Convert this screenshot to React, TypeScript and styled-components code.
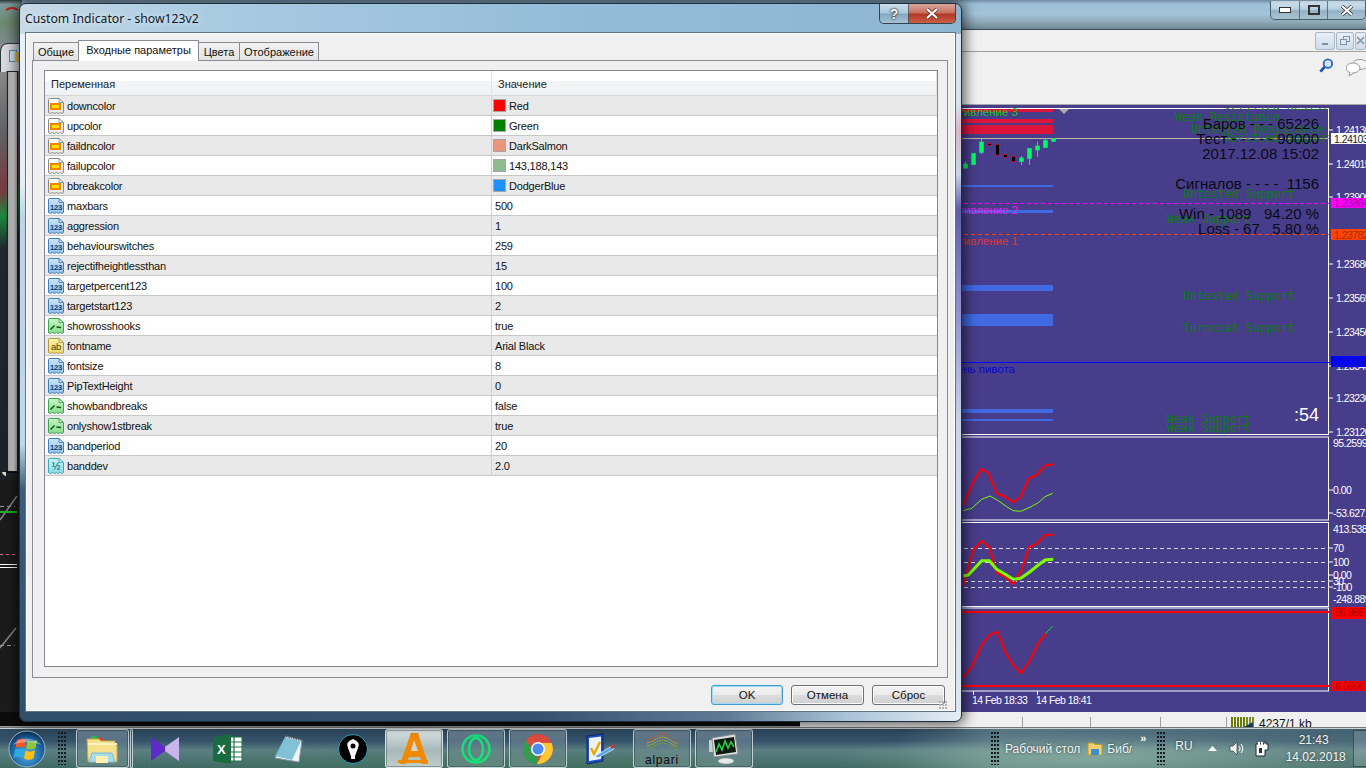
import React from "react";
import styled, { createGlobalStyle } from "styled-components";

const Global = createGlobalStyle`
  html, body { margin: 0; padding: 0; background: #000; overflow: hidden; }
  * { box-sizing: border-box; }
`;

const UI = `"Liberation Sans", Arial, sans-serif`;

const Desktop = styled.div`
  position: relative; width: 1366px; height: 768px; overflow: hidden;
  display: flex; flex-direction: column; font-family: ${UI}; font-size: 11px; color: #111;
`;
const MainTitle = styled.div`
  height: 30px; flex: none; display: flex; justify-content: flex-end; align-items: flex-start;
  border-bottom: 1px solid #3d4a55;
  background: linear-gradient(180deg, #6f8aa0 0, #9cc0d8 4px, #a3c4da 14px, #8fa8b8 22px, #6f8793 29px);
  padding-top: 1px;
`;
const CaptionGroup = styled.div`
  display: flex; height: 19px; border: 1px solid #4a5c6a; border-top: 0; border-radius: 0 0 5px 5px; overflow: hidden;
`;
const CaptionBtn = styled.div<{ $w: number; $red?: boolean }>`
  width: ${p => p.$w}px; display: flex; align-items: center; justify-content: center;
  border-left: 1px solid rgba(60,80,95,.7);
  background: ${p => p.$red
    ? "linear-gradient(180deg,#dba79e 0,#c9705f 45%,#b03a26 55%,#c9604a 100%)"
    : "linear-gradient(180deg,rgba(255,255,255,.55) 0,rgba(255,255,255,.25) 45%,rgba(120,140,150,.35) 55%,rgba(190,210,220,.45) 100%)"};
  &:first-child { border-left: 0; }
`;
const MdiBar = styled.div`
  height: 22px; flex: none; background: #f0f0f0; border-bottom: 1px solid #a0a0a0;
  display: flex; justify-content: flex-end; align-items: center; padding-right: 0;
  gap: 1px;
`;
const MdiBtn = styled.div<{ $w: number }>`
  width: ${p => p.$w}px; height: 18px; border: 1px solid #a9b8c6; border-radius: 2px;
  background: linear-gradient(180deg,#e9eff6,#cfdcea); display: flex; align-items: center; justify-content: center;
  color: #6b8299;
`;
const Toolbar = styled.div`
  height: 53px; flex: none; background: #f0f0f0; border-bottom: 1px solid #a8a8a8;
  display: flex; justify-content: flex-end; align-items: flex-start; padding: 3px 0 0 0; gap: 12px;
`;
const Workspace = styled.svg`
  display: block; flex: none; width: 1366px; height: 607px; background: #483d8b;
`;
const StatusBar = styled.div`
  height: 16px; flex: none; background: #f0f0f0; display: flex; overflow: hidden;
  padding-left: 1022px; border-bottom: 1px solid #777;
`;
const StatusCell = styled.div<{ $w: number }>`
  width: ${p => p.$w}px; height: 11px; margin-top: 5px; border-left: 1px solid #a0a0a0; display: flex; gap: 4px; padding-left: 4px;
  font-size: 12px; line-height: 14px; white-space: nowrap; align-items: flex-start; color: #111;
`;
const BlackStrip = styled.div`
  position: absolute; left: 0; top: 712px; width: 800px; height: 15px; background: #0c0c0c;
  border-bottom: 1px solid #9a9a9a;
`;
const LeftStrip = styled.svg`
  position: absolute; left: 0; top: 0; width: 22px; height: 480px;
`;
const Taskbar = styled.div`
  height: 40px; flex: none; display: flex; align-items: stretch; position: relative; color: #f4f4f4;
  border-top: 1px solid #c8d2d6;
  background:
    radial-gradient(ellipse 260px 26px at 1090px 30px, rgba(150,190,170,.55), transparent),
    radial-gradient(ellipse 300px 20px at 480px 36px, rgba(70,120,95,.6), transparent),
    linear-gradient(90deg, rgba(0,0,0,0) 0, rgba(0,0,0,0) 900px, rgba(140,170,170,.45) 1000px, rgba(120,150,150,.3) 100%),
    linear-gradient(180deg, #2e4a60 0, #34526a 30%, #5b7f82 55%, #3f6a62 100%);
`;
const Orb = styled.div`
  width: 58px; flex: none; display: flex; align-items: center; justify-content: center; padding-right: 4px;
`;
const Grip = styled.div<{ $ml?: number }>`
  width: 8px; margin: 3px 0 3px ${p => p.$ml ?? 0}px; flex: none;
  background-image: radial-gradient(circle at 1px 1px, #161d22 1px, transparent 1.2px);
  background-size: 3px 4px;
`;
const TaskSlot = styled.div<{ $w: number; $ml?: number; $boxed?: boolean; $bright?: boolean }>`
  width: ${p => p.$w}px; margin-left: ${p => p.$ml ?? 0}px; flex: none; display: flex; flex-direction: column;
  align-items: center; justify-content: center; border-radius: 3px;
  ${p => p.$boxed ? `border: 1px solid rgba(225,235,240,.75);
    box-shadow: inset 0 0 0 1px rgba(20,40,50,.35);
    background: ${p.$bright
      ? "linear-gradient(180deg,rgba(240,245,245,.92),rgba(180,195,195,.85) 55%,rgba(205,215,215,.9))"
      : "linear-gradient(180deg,rgba(200,215,220,.38),rgba(130,150,160,.3) 50%,rgba(140,165,165,.42))"};` : ""}
`;
const AlpariLabel = styled.div`
  font-size: 12px; line-height: 12px; color: #0d0d0d; letter-spacing: .8px; margin-top: 0;
`;
const TrayText = styled.div<{ $ml: number; $w?: number; $dy?: number }>`
  margin-left: ${p => p.$ml}px; margin-top: ${p => p.$dy ?? 0}px; ${p => p.$w ? `width:${p.$w}px;overflow:hidden;` : ""} flex: none; font-size: 12px;
  white-space: nowrap; align-self: center; color: #eef2f2; text-shadow: 0 0 3px rgba(0,0,0,.6);
`;
const Chevron = styled.div`
  margin-left: 8px; align-self: flex-start; font-size: 11px; font-weight: bold; line-height: 18px; flex: none; width: 9px; color: #fff;
`;
const TrayIcon = styled.div<{ $ml: number }>`
  margin-left: ${p => p.$ml}px; flex: none; align-self: center; display: flex;
`;
const Clock = styled.div`
  margin-left: 17px; width: 56px; flex: none; text-align: center; font-size: 12px; line-height: 17px; align-self: center; color: #f4f6f6;
  text-shadow: 0 0 3px rgba(0,0,0,.5);
`;
const ShowDesktop = styled.div`
  margin-left: 11px; flex: none; width: 14px; margin-top: 1px; margin-bottom: 1px;
  border: 1px solid rgba(40,55,60,.7); background: rgba(220,235,235,.18);
`;

/* dialog */
const Dialog = styled.div`
  position: absolute; left: 19px; top: 3px; width: 943px; height: 719px; display: flex; flex-direction: column;
  border-radius: 7px; padding: 0 5px 9px 5px; border: 1px solid #1f2d3a;
  box-shadow: 0 0 13px 3px rgba(0,0,0,.62);
  background:
    linear-gradient(90deg, #c6d9e6 0, #a9cbe2 20%, #93bbd7 60%, #8eb6d2 100%) top / 100% 30px no-repeat,
    linear-gradient(90deg, #2f4e6a 0, #34526e 55%, #5d7b95 75%, #aac3d8 88%, #e4edf4 100%) bottom / 100% 10px no-repeat,
    linear-gradient(180deg, #e9f2fb 0, #e4eff9 180px, #bcd5ec 212px, #bed8f0 440px, #3b5c7c 485px, #2f4e6a 100%) left top / 6px 100% no-repeat,
    linear-gradient(180deg, #dce9f4 0, #d6e4f0 100px, #d8b6c8 125px, #c8d6ea 170px, #5e5ea8 205px, #8e8ed0 300px, #c8d4ea 420px, #dbe7f0 100%) right top / 6px 100% no-repeat,
    #c8d8e6;
`;
const DialogTitle = styled.div`
  height: 28px; flex: none; display: flex; justify-content: space-between; align-items: flex-start; font: 12.2px "Noto Sans", sans-serif; color: #10181f;
`;
const DialogCaption = styled.div`
  padding: 6px 0 0 0; text-shadow: 0 0 6px rgba(255,255,255,.9);
`;
const DialogButtons = styled(CaptionGroup)`
  margin-right: 0; height: 20px; border-color: #33434f;
`;
const Client = styled.div`
  flex: 1; display: flex; flex-direction: column; background: #f0f0f0; border: 1px solid #5f7385; padding: 7px 7px 0 6px; min-height: 0;
  box-shadow: inset 0 0 0 1px rgba(255,255,255,.85);
`;
const TabBar = styled.div`
  display: flex; height: 20px; flex: none; padding-left: 2px; align-items: flex-end; position: relative; z-index: 1;
`;
const Tab = styled.div<{ $w: number; $active?: boolean }>`
  width: ${p => p.$w}px; flex: none; text-align: center; white-space: nowrap;
  border: 1px solid #898c95; border-bottom: 0;
  ${p => p.$active ? `height: 21px; margin-bottom: -1px; background: #fff; line-height: 19px; position: relative; z-index: 2; margin-left:-1px;`
    : `height: 18px; background: linear-gradient(180deg,#f2f2f2,#e3e3e3); line-height: 18px; margin-left:-1px;`}
`;
const Pane = styled.div`
  height: 618px; flex: none; border: 1px solid #898c95; background: #f0f0f0; padding: 9px 9px 10px 11px; display: flex;
`;
const List = styled.div`
  flex: 1; border: 1px solid #828790; background: #fff; display: flex; flex-direction: column;
`;
const HeaderRow = styled.div`
  height: 25px; flex: none; display: grid; grid-template-columns: 447px 1fr; border-bottom: 1px solid #d5d5d5;
  background: linear-gradient(180deg,#fff 0,#fff 40%,#f3f4f6 42%,#f1f2f4 100%);
`;
const HeaderCell = styled.div`
  padding: 0 0 0 6px; line-height: 26px; border-right: 1px solid #e3e4e6; color: #222;
`;
const Row = styled.div<{ $alt: boolean }>`
  height: 20px; flex: none; display: grid; grid-template-columns: 447px 1fr; border-bottom: 1px solid #c8c8c8;
  letter-spacing: -.2px;
  background: ${p => p.$alt ? "#e9e9e9" : "#fff"};
`;
const NameCell = styled.div`
  display: flex; align-items: center; padding-left: 3px; gap: 3px; border-right: 1px solid #d0d0d0; height: 19px; color: #111;
`;
const ValueCell = styled.div`
  display: flex; align-items: center; padding-left: 3px; gap: 3px; height: 19px; color: #111;
`;
const Swatch = styled.span<{ $c: string }>`
  width: 13px; height: 13px; flex: none; background: ${p => p.$c}; border: 1px solid #a5a5a5; margin-left: -2px;
`;
const Footer = styled.div`
  flex: 1; display: flex; justify-content: flex-end; gap: 8px; padding: 7px 3px 0 0; position: relative;
`;
const Btn = styled.div<{ $def?: boolean }>`
  width: ${p => p.$def ? 72 : 73}px; height: 20px; text-align: center; line-height: 18px; font-size: 11.5px; border-radius: 3px;
  border: 1px solid ${p => p.$def ? "#3c9fd0" : "#707070"};
  box-shadow: inset 0 0 0 1px ${p => p.$def ? "#9edcf5" : "#fbfbfb"};
  background: linear-gradient(180deg,#f3f3f3 0,#ebebeb 48%,#ddd 50%,#cfcfcf 100%);
`;
const SizeGrip = styled.div`
  position: absolute; right: 0; bottom: 1px; width: 9px; height: 9px;
  background-image: radial-gradient(circle at 1px 1px, #b5b5b5 1px, transparent 1.1px);
  background-size: 3px 3px;
`;

type Kind = "color" | "int" | "bool" | "str" | "dbl";
const palette: Record<Kind, { a: string; b: string; line: string }> = {
  color: { a: "#fff", b: "#e6e6e6", line: "#8a8a8a" },
  int: { a: "#cfe4f8", b: "#8fc0ea", line: "#3f7fb8" },
  bool: { a: "#c8f3c4", b: "#86dc8c", line: "#3aa552" },
  str: { a: "#fbf1b0", b: "#ecd670", line: "#b09a3c" },
  dbl: { a: "#c8f2f4", b: "#86dce4", line: "#3eaab8" },
};
const ParamIcon = ({ kind }: { kind: Kind }) => {
  const p = palette[kind];
  const id = `g-${kind}`;
  return (
    <svg width="16" height="16" viewBox="0 0 16 16" style={{ flex: "none" }}>
      <defs>
        <linearGradient id={id} x1="0" y1="0" x2="0" y2="1">
          <stop offset="0" stopColor={p.a} /><stop offset="1" stopColor={p.b} />
        </linearGradient>
      </defs>
      <path d="M.5 1.5 Q.5.5 1.5.5 H11 L15.5 4.5 V14.5 l-1.5 1 -1.5-1 -2 1 -2-1 -2 1 -2-1 -2 1 -2-1Z" fill={`url(#${id})`} stroke={p.line} strokeWidth="1" />
      <path d="M11 .5V4.5H15.5" fill="none" stroke={p.line} strokeWidth=".8" />
      {kind === "color" && <>
        <rect x="2" y="5" width="11" height="7" fill="#f08400" />
        <rect x="4" y="7" width="7" height="3" fill="#ffdd00" />
      </>}
      {kind === "int" && <text x="8" y="12" textAnchor="middle" fontFamily={UI} fontSize="7.5" fontWeight="bold" fill="#0b3f73" letterSpacing="-.2">123</text>}
      {kind === "bool" && <path d="M2.5 11.5 L6.5 7.5 M8.5 9 L13 9.5" stroke="#0a5a1c" strokeWidth="1.5" fill="none" />}
      {kind === "str" && <text x="8" y="12" textAnchor="middle" fontFamily={UI} fontSize="9.5" fill="#4a3c00">ab</text>}
      {kind === "dbl" && <text x="8" y="12" textAnchor="middle" fontFamily={UI} fontSize="10" fill="#08525c">½</text>}
    </svg>
  );
};

const rows: { n: string; k: Kind; v: string; c?: string }[] = [
  { n: "downcolor", k: "color", v: "Red", c: "#ff0000" },
  { n: "upcolor", k: "color", v: "Green", c: "#008000" },
  { n: "faildncolor", k: "color", v: "DarkSalmon", c: "#e9967a" },
  { n: "failupcolor", k: "color", v: "143,188,143", c: "#8fbc8f" },
  { n: "bbreakcolor", k: "color", v: "DodgerBlue", c: "#1e90ff" },
  { n: "maxbars", k: "int", v: "500" },
  { n: "aggression", k: "int", v: "1" },
  { n: "behaviourswitches", k: "int", v: "259" },
  { n: "rejectifheightlessthan", k: "int", v: "15" },
  { n: "targetpercent123", k: "int", v: "100" },
  { n: "targetstart123", k: "int", v: "2" },
  { n: "showrosshooks", k: "bool", v: "true" },
  { n: "fontname", k: "str", v: "Arial Black" },
  { n: "fontsize", k: "int", v: "8" },
  { n: "PipTextHeight", k: "int", v: "0" },
  { n: "showbandbreaks", k: "bool", v: "false" },
  { n: "onlyshow1stbreak", k: "bool", v: "true" },
  { n: "bandperiod", k: "int", v: "20" },
  { n: "banddev", k: "dbl", v: "2.0" },
];

/* chart helpers: curve data given in 3x coordinates from origin (950,470) */
const pts = (a: number[][]) => a.map(([x, y]) => `${(950 + x / 3).toFixed(1)},${(470 + y / 3).toFixed(1)}`).join(" ");
const candles: [number, number, number, number, number, boolean][] = [
  [316, 492, 504, 484, 506, true], [340, 460, 494, 460, 494, true], [364, 426, 458, 416, 462, true],
  [388, 431, 436, 418, 438, false], [412, 433, 465, 425, 465, false], [436, 463, 472, 445, 480, false],
  [460, 469, 485, 469, 495, false], [484, 474, 485, 468, 495, true], [508, 445, 476, 445, 495, true],
  [532, 438, 450, 425, 470, true], [556, 421, 443, 416, 443, true], [580, 416, 424, 416, 426, true],
];
const AxisText = ({ x, y, t, c = "#fff" }: { x: number; y: number; t: string; c?: string }) => (
  <text x={x} y={y} fill={c} fontSize="10.5" letterSpacing="-.55" fontFamily={UI}>{t}</text>
);
const ax = (y: number, t: string, x = 1336) => (
  <g key={t + y}>
    <line x1="1329" x2="1333" y1={y} y2={y} stroke="#fff" />
    <AxisText x={x} y={y + 4} t={t} />
  </g>
);
const Zone = ({ y, h, c }: { y: number; h: number; c: string }) => <rect x="19" y={y} width="1034" height={h} fill={c} />;
const Lbl = ({ x, y, t }: { x: number; y: number; t: string }) => (
  <text x={x} y={y} fill="#0a7d10" fontFamily={`"DejaVu Sans Mono", monospace`} fontSize="11.6">{t}</text>
);
const Big = ({ y, t }: { y: number; t: string }) => (
  <text x="1319" y={y} textAnchor="end" fill="#0a0a14" fontFamily={UI} fontSize="15" style={{ whiteSpace: "pre" }}>{t}</text>
);
const PriceBox = ({ y, h, bg, c, t }: { y: number; h: number; bg: string; c: string; t: string }) => (
  <g>
    <rect x="1331" y={y} width="35" height={h} fill={bg} />
    <AxisText x={1334} y={y + h - 1.5} c={c} t={t} />
  </g>
);

export default function App() {
  return (
    <Desktop>
      <Global />
      <MainTitle>
        <CaptionGroup>
          <CaptionBtn $w={28}><svg width="12" height="6"><rect x=".5" y=".5" width="11" height="5" fill="#fff" stroke="#333" /></svg></CaptionBtn>
          <CaptionBtn $w={28}><svg width="12" height="10"><rect x="1" y="1" width="10" height="8" fill="none" stroke="#333" strokeWidth="2" /></svg></CaptionBtn>
          <CaptionBtn $w={38}><svg width="12" height="11" viewBox="0 0 12 11"><path d="M1 1L11 10M11 1L1 10" stroke="#333" strokeWidth="3.6" /><path d="M1 1L11 10M11 1L1 10" stroke="#fff" strokeWidth="2.2" /></svg></CaptionBtn>
        </CaptionGroup>
      </MainTitle>
      <MdiBar>
        <MdiBtn $w={20}><svg width="8" height="8"><rect x="1" y="6" width="6" height="2" fill="#7d93a8" /></svg></MdiBtn>
        <MdiBtn $w={18}><svg width="11" height="10" fill="none" stroke="#7d93a8"><rect x="3.5" y=".5" width="6" height="5" /><rect x=".5" y="3.5" width="6" height="5" fill="#dfe8f2" /></svg></MdiBtn>
        <MdiBtn $w={11}><svg width="9" height="9"><path d="M1 1L8 8M8 1L1 8" stroke="#7d93a8" strokeWidth="1.5" /></svg></MdiBtn>
      </MdiBar>
      <Toolbar>
        <svg width="15" height="15" viewBox="0 0 16 16" style={{ marginTop: 3 }}>
          <circle cx="9.5" cy="6" r="4.5" fill="#d8e8f8" stroke="#2f68b8" strokeWidth="2" />
          <path d="M6 9.5L1.5 14.5" stroke="#1f54a8" strokeWidth="3" />
        </svg>
        <svg width="20" height="20" viewBox="0 0 20 20" style={{ marginTop: 3, marginRight: 0 }}>
          <ellipse cx="14" cy="6.5" rx="7.5" ry="5" fill="#f4f4f4" stroke="#9a9a9a" />
          <ellipse cx="7" cy="10" rx="7" ry="5" fill="#fff" stroke="#9a9a9a" />
          <path d="M4 14L3 18L8 15" fill="#fff" stroke="#9a9a9a" />
        </svg>
      </Toolbar>
      <Workspace viewBox="0 105 1366 607">
        <rect x="0" y="105" width="25" height="607" fill="#1c1c1c" />
        <path d="M0 520 L17 496" stroke="#8a8a8a" strokeWidth="1.5" />
        <path d="M0 648 L16 628" stroke="#8a8a8a" strokeWidth="1.5" />
        <line x1="0" x2="17" y1="512" y2="512" stroke="#22b422" strokeWidth="2" />
        <line x1="0" x2="15" y1="554.5" y2="554.5" stroke="#e06090" strokeDasharray="3 3" />
        <line x1="0" x2="17" y1="564.5" y2="564.5" stroke="#fff" />
        <line x1="0" x2="17" y1="567.5" y2="567.5" stroke="#fff" />
        <line x1="0" x2="15" y1="506.5" y2="506.5" stroke="#999" strokeDasharray="4 3" />
        <line x1="0" x2="15" y1="645.5" y2="645.5" stroke="#999" strokeDasharray="4 3" />

        <rect x="25" y="105" width="1341" height="607" fill="#483d8b" />
        <rect x="25.5" y="108.5" width="1303" height="326" fill="none" stroke="#fff" />
        <rect x="25.5" y="437" width="1303" height="83" fill="none" stroke="#fff" />
        <rect x="25.5" y="522.5" width="1303" height="84" fill="none" stroke="#fff" />
        <rect x="25.5" y="608" width="1303" height="83" fill="none" stroke="#fff" />

        <Zone y={109} h={3} c="#dc143c" /><Zone y={119} h={4} c="#dc143c" /><Zone y={125} h={9} c="#dc143c" />
        <Zone y={185} h={2} c="#4169e1" /><Zone y={210} h={3} c="#4169e1" /><Zone y={285} h={6} c="#4169e1" />
        <Zone y={314} h={12} c="#4169e1" /><Zone y={409} h={4} c="#4169e1" /><Zone y={419} h={2} c="#4169e1" />

        <line x1="26" x2="1329" y1="138.5" y2="138.5" stroke="#b9b9a0" />
        <line x1="26" x2="1329" y1="203.5" y2="203.5" stroke="#ff00ff" strokeDasharray="4 3" />
        <line x1="26" x2="1329" y1="234.5" y2="234.5" stroke="#ff4500" strokeDasharray="4 3" />
        <line x1="26" x2="1329" y1="362.5" y2="362.5" stroke="#0000ff" strokeWidth="1" />
        <path d="M1059 109H1069L1064 114Z" fill="#a9a9a9" />

        {candles.map(([x, t, b, wt, wb, up]) => {
          const cx = Math.round(860 + x / 3) + .5;
          const c = up ? "#00f060" : "#ff0000";
          return (
            <g key={x}>
              <line x1={cx} x2={cx} y1={wt / 3} y2={wb / 3} stroke={c} />
              <rect x={cx - 2} y={t / 3} width="4" height={Math.max((b - t) / 3, 1)} fill={up ? "#00ff60" : "#000"} stroke={up ? "#00e060" : "#ff0000"} strokeWidth=".8" />
            </g>
          );
        })}

        <text x="1018" y="116" textAnchor="end" fill="#22c02a" fontFamily={UI} fontSize="11.5">Сопротивление 3</text>
        <text x="1018" y="214" textAnchor="end" fill="#e020e8" fontFamily={UI} fontSize="11.5">Сопротивление 2</text>
        <text x="1018" y="245" textAnchor="end" fill="#d83a3a" fontFamily={UI} fontSize="11.5">Сопротивление 1</text>
        <text x="1015" y="373" textAnchor="end" fill="#0808d8" fontFamily={UI} fontSize="11.5">Уровень пивота</text>

        <svg x="0" y="108" width="1329" height="326" viewBox="0 108 1329 326">
          <Lbl x={1224} y={110} t="Verified Resistance" />
          <Lbl x={1175} y={121} t="Weak Resistance" />
          <Lbl x={1191} y={133} t="Untested Resistance" />
          <Lbl x={1223} y={142} t="Verified Support" />
          <Lbl x={1183} y={198} t="Untested Support" />
          <Lbl x={1167} y={223} t="Weak Support" />
          <Lbl x={1183} y={300} t="Untested Support" />
          <Lbl x={1183} y={332} t="Turncoat Support" />
          <Lbl x={1167} y={423} t="Weak Support" />
          <Lbl x={1167} y={432} t="Weak Support" />
        </svg>
        <Big y={129} t="Баров - - - 65226" />
        <Big y={144} t="Тест - - - - - 90000" />
        <Big y={159} t="2017.12.08 15:02" />
        <Big y={189} t="Сигналов - - - -  1156" />
        <Big y={219} t="Win - 1089   94.20 %" />
        <Big y={234} t="Loss - 67   5.80 %" />
        <text x="1319" y="421" textAnchor="end" fill="#fff" fontFamily={UI} fontSize="18">:54</text>

        {ax(130, "1.24130")}{ax(164, "1.24015")}{ax(197, "1.23900")}{ax(264, "1.23680")}{ax(298, "1.23565")}
        {ax(332, "1.23450")}{ax(366, "1.23340")}{ax(398, "1.23230")}{ax(432, "1.23120")}
        <PriceBox y={133} h={11} bg="#fff" c="#222" t="1.24103" />
        <PriceBox y={198} h={10} bg="#ff00ff" c="#a000a0" t="1.23884" />
        <PriceBox y={229} h={11} bg="#ff4500" c="#a82c00" t="1.23782" />
        <PriceBox y={356} h={11} bg="#0000ff" c="#1818b0" t="1.23349" />

        <AxisText x={1333} y={447} t="95.2599" />
        {ax(490, "0.00", 1333)}
        {ax(513, "-53.6271", 1333)}
        <AxisText x={1333} y={533} t="413.538" />
        {ax(548, "70", 1333)}{ax(562, "100", 1333)}{ax(575, "0.00", 1333)}{ax(581, "30", 1333)}{ax(587, "-100", 1333)}
        <AxisText x={1333} y={603} t="-248.889" />
        <AxisText x={1333} y={619} t="100" />

        <polyline fill="none" stroke="#ff0000" strokeWidth="2" points={pts([[40, 105], [70, 35], [95, -3], [115, 10], [140, 70], [165, 80], [190, 97], [212, 80], [237, 25], [260, 15], [285, -13], [310, -17]])} />
        <polyline fill="none" stroke="#7cfc00" strokeWidth="1" points={pts([[40, 122], [65, 115], [95, 88], [120, 78], [145, 92], [170, 110], [190, 122], [212, 124], [240, 112], [265, 98], [285, 80], [308, 70]])} />

        {[548, 562, 581, 587].map(y => <line key={y} x1="26" x2="1329" y1={y + .5} y2={y + .5} stroke="#d8d8d8" strokeDasharray="4 3" />)}
        <polyline fill="none" stroke="#ff0000" strokeWidth="2" points={pts([[40, 345], [70, 240], [95, 212], [118, 232], [140, 308], [165, 320], [190, 343], [215, 300], [237, 232], [262, 220], [287, 194], [312, 194]])} />
        <polyline fill="none" stroke="#7cfc00" strokeWidth="3" points={pts([[40, 318], [55, 315], [95, 272], [118, 272], [140, 298], [165, 312], [190, 328], [212, 325], [240, 305], [265, 285], [285, 270], [310, 268]])} />

        <line x1="26" x2="1329" y1="612" y2="612" stroke="#ff0000" strokeWidth="2" />
        <line x1="26" x2="1329" y1="686" y2="686" stroke="#ff0000" strokeWidth="2" />
        <rect x="1331" y="607" width="35" height="12" fill="#ff0000" />
        <AxisText x={1335} y={616} c="#a80000" t="96.9697" />
        <rect x="1331" y="681" width="35" height="10" fill="#ff0000" />
        <AxisText x={1335} y={690} c="#a80000" t="6.0606" />
        <polyline fill="none" stroke="#ff0000" strokeWidth="2" points={pts([[40, 622], [65, 590], [95, 525], [118, 495], [143, 485], [165, 545], [190, 585], [213, 610], [240, 570], [265, 520], [287, 490]])} />
        <polyline fill="none" stroke="#00e040" strokeWidth="1" points={pts([[287, 490], [308, 468]])} />

        <line x1="973.5" x2="973.5" y1="691" y2="695" stroke="#fff" />
        <line x1="1037.5" x2="1037.5" y1="691" y2="695" stroke="#fff" />
        <AxisText x={972} y={704} t="14 Feb 18:33" />
        <AxisText x={1036} y={704} t="14 Feb 18:41" />
      </Workspace>
      <StatusBar>
        <StatusCell $w={68} /><StatusCell $w={70} /><StatusCell $w={66} />
        <StatusCell $w={120}>
          <svg width="24" height="16" viewBox="0 0 24 16" style={{ flex: "none" }}>
            {[0, 3, 6, 9, 12, 15, 18, 21].map((x, i) => <rect key={x} x={x} y="0" width="2" height="14" fill={i < 5 ? "#6b7a00" : "#7d8a20"} />)}
            <path d="M6 14L22 5V14Z" fill="#123a5a" />
          </svg>
          4237/1 kb
        </StatusCell>
      </StatusBar>
      <Taskbar>
        <Orb>
          <svg width="38" height="38" viewBox="0 0 38 38">
            <defs>
              <radialGradient id="orb" cx=".5" cy=".65" r=".65">
                <stop offset="0" stopColor="#4fb2e8" /><stop offset=".7" stopColor="#1a5f9c" /><stop offset="1" stopColor="#0c2a4a" />
              </radialGradient>
            </defs>
            <circle cx="19" cy="19" r="18" fill="url(#orb)" stroke="#9fb8c8" strokeWidth="1" />
            <path d="M9 10Q14 7 18 10L16.5 18Q12 15.5 7.5 18Z" fill="#f05a28" />
            <path d="M19.5 10.5Q24 13 29 10L27.5 18.5Q23 20.5 18 18.5Z" fill="#8cc63f" />
            <path d="M7 19.5Q12 17 16 20L14.5 28Q10 25.5 5.5 28Z" fill="#2fa8e0" />
            <path d="M17.5 20.5Q22 23 27 20L25.5 28.5Q21 31 16 28.5Z" fill="#fdc013" />
            <path d="M4 15Q19 2 34 15Q19 9 4 15Z" fill="#fff" opacity=".35" />
          </svg>
        </Orb>
        <Grip />
        <TaskSlot $w={53} $ml={10} $boxed>
          <svg width="33" height="32" viewBox="0 0 33 32">
            <rect x="5" y="3" width="6" height="3" fill="#35b54a" /><rect x="12" y="5" width="5" height="3" fill="#d9452e" /><rect x="20" y="8" width="5" height="3" fill="#2a9fe0" />
            <path d="M1 6H13L15 8H29V12H31V28Q31 29 30 29H3Q2 29 2 28Z" fill="#f5e08c" stroke="#c8a84a" />
            <path d="M2 11H31" stroke="#fff3c0" strokeWidth="2" />
            <path d="M6 20H26L29 29H3Z" fill="#a5ddf0" stroke="#7bb8d0" />
            <rect x="10" y="23" width="12" height="7" fill="#fdf0b0" />
          </svg>
        </TaskSlot>
        <TaskSlot $w={3} $ml={1} $boxed />
        <TaskSlot $w={58} $ml={3}>
          <svg width="30" height="26" viewBox="0 0 30 26">
            <path d="M1 1L15 11V15L1 25Z" fill="#5f2bc8" />
            <path d="M29 1L15 11V15L29 25Z" fill="#c9b4ec" />
          </svg>
        </TaskSlot>
        <TaskSlot $w={62} $ml={3}>
          <svg width="30" height="30" viewBox="0 0 30 30">
            <rect x="13" y="3" width="16" height="24" fill="#fff" stroke="#1f7246" />
            <path d="M14 8H29M14 13H29M14 18H29M14 23H29M21 3V27" stroke="#1f7246" strokeWidth="1.2" />
            <path d="M0 3L18 0V30L0 27Z" fill="#1a6b41" />
            <text x="4" y="20" fontFamily={UI} fontWeight="bold" fontSize="13" fill="#fff">X</text>
          </svg>
        </TaskSlot>
        <TaskSlot $w={62} $ml={0}>
          <svg width="32" height="30" viewBox="0 0 32 30">
            <path d="M12 2L28 6L25 28L1 24Z" fill="#f0f4f6" stroke="#8a9aa0" />
            <path d="M11 3L27 7L18 26L1 22Z" fill="#6fb8d0" opacity=".85" />
            <path d="M12 2L28 6" stroke="#555" strokeWidth="2" strokeDasharray="1.5 1" />
          </svg>
        </TaskSlot>
        <TaskSlot $w={64} $ml={0}>
          <svg width="30" height="30" viewBox="0 0 30 30">
            <circle cx="15" cy="15" r="14.5" fill="#000" stroke="#2aa0c0" />
            <path d="M15 5Q7 8 10 14L13 22H17L20 14Q23 8 15 5Z" fill="#fff" />
            <circle cx="15" cy="12" r="2.5" fill="#000" />
            <rect x="13" y="22" width="4" height="3" fill="#fff" />
          </svg>
        </TaskSlot>
        <TaskSlot $w={58} $ml={0} $boxed $bright>
          <svg width="32" height="34" viewBox="0 0 32 34">
            <path d="M13 1H20L30 32H24L22 25H11L8 32H2Z" fill="#ef8a00" />
            <path d="M16 8L13 19H20Z" fill="#cfd6d6" />
            <path d="M0 28H30V31H0Z" fill="#ef8a00" />
          </svg>
        </TaskSlot>
        <TaskSlot $w={58} $ml={4} $boxed>
          <svg width="30" height="30" viewBox="0 0 30 30" fill="none" stroke="#16e07a">
            <circle cx="15" cy="15" r="13.5" strokeWidth="2.5" />
            <ellipse cx="15" cy="15" rx="7" ry="11" strokeWidth="2.5" />
          </svg>
        </TaskSlot>
        <TaskSlot $w={58} $ml={4} $boxed>
          <svg width="30" height="30" viewBox="0 0 30 30">
            <circle cx="15" cy="15" r="15" fill="#dd4b3e" />
            <path d="M15 15L2 23A15 15 0 0 0 15 30Z" fill="#2e9e4f" />
            <path d="M2 23A15 15 0 0 1 3 6L10 17Z" fill="#2e9e4f" />
            <path d="M15 9H28.6A15 15 0 0 1 14 30L21 17Z" fill="#fcc934" />
            <circle cx="15" cy="15" r="7" fill="#fff" /><circle cx="15" cy="15" r="5.5" fill="#4a8af4" />
          </svg>
        </TaskSlot>
        <TaskSlot $w={66}>
          <svg width="32" height="32" viewBox="0 0 32 32">
            <path d="M3 3L19 1V28L3 31Z" fill="#1d4fc0" stroke="#0c2a70" />
            <path d="M5 5L17 3.5V26L5 28Z" fill="#eef3fa" />
            <path d="M7 15L10 21L16 9" stroke="#e8a800" strokeWidth="2.4" fill="none" />
            <path d="M11 23L28 13L30 16L14 25Z" fill="#5da5e8" stroke="#fff" strokeWidth=".6" />
            <circle cx="28.5" cy="13.5" r="2" fill="#d83020" />
          </svg>
        </TaskSlot>
        <TaskSlot $w={58} $boxed>
          <svg width="32" height="22" viewBox="0 0 32 22" fill="none" strokeWidth="1">
            <path d="M1 8L7 6L12 3L16 1L21 3L26 6L31 9" stroke="#e05028" strokeDasharray="2 .6" />
            <path d="M1 11L7 9L12 6L16 5L21 6L26 9L31 12" stroke="#d8a030" strokeDasharray="2 .6" />
            <path d="M1 14L7 12L12 9L16 8L21 9L26 12L31 15" stroke="#a0b030" strokeDasharray="2 .6" />
            <path d="M1 17L7 15L12 12L16 11L21 12L26 15L31 18" stroke="#70a030" strokeDasharray="2 .6" />
          </svg>
          <AlpariLabel>alpari</AlpariLabel>
        </TaskSlot>
        <TaskSlot $w={58} $ml={4} $boxed>
          <svg width="32" height="32" viewBox="0 0 32 32">
            <rect x="1" y="7" width="6" height="12" fill="#c9cfc9" />
            <path d="M4 5L27 1L30 21L6 24Z" fill="#dfe3e3" stroke="#8a9090" />
            <path d="M6 7L26 4L28 19L8 22Z" fill="#101812" />
            <path d="M8 19L11 11L14 17L17 8L20 15L23 9L26 14" stroke="#22d040" strokeWidth="1.6" fill="none" />
            <ellipse cx="18" cy="28" rx="8" ry="3" fill="#e4e8e8" stroke="#999" strokeWidth=".6" />
          </svg>
        </TaskSlot>
        <Grip $ml={238} />
        <TrayText $ml={6} $dy={1}>Рабочий стол</TrayText>
        <TrayIcon $ml={7}>
          <svg width="16" height="15" viewBox="0 0 16 15">
            <path d="M1 2H7L8 3.5H15V14H1Z" fill="#f2cf6e" stroke="#b89a3a" />
            <rect x="4" y="8" width="8" height="6" fill="#3d8ecf" />
          </svg>
        </TrayIcon>
        <TrayText $ml={4} $w={25}>Библиотеки</TrayText>
        <Chevron>»</Chevron>
        <Grip $ml={8} />
        <TrayText $ml={10} $dy={-6}>RU</TrayText>
        <TrayIcon $ml={15}><svg width="9" height="5"><path d="M0 5L4.5 0L9 5Z" fill="#fff" /></svg></TrayIcon>
        <TrayIcon $ml={12}>
          <svg width="16" height="15" viewBox="0 0 16 15" fill="none">
            <path d="M1 5H4L8 1V14L4 10H1Z" fill="#f2f2f2" stroke="#1a2a30" strokeWidth=".6" />
            <path d="M10 5Q12 7.5 10 10M12 3Q15.5 7.5 12 12" stroke="#e8eeee" strokeWidth="1.2" />
          </svg>
        </TrayIcon>
        <TrayIcon $ml={9}>
          <svg width="15" height="16" viewBox="0 0 15 16">
            <path d="M2 3H10V1H12V3H14V9H11V15H2Z" fill="#fff" stroke="#1a2a30" />
            <path d="M5 4V1M8 4V1" stroke="#fff" strokeWidth="2" />
            <rect x="5" y="7" width="3" height="5" fill="#26343a" />
          </svg>
        </TrayIcon>
        <Clock>21:43<br />14.02.2018</Clock>
        <ShowDesktop />
      </Taskbar>
      <BlackStrip />
      <LeftStrip viewBox="0 0 22 480">
        <defs>
          <linearGradient id="lsTop" x1="0" y1="0" x2="0" y2="1">
            <stop offset="0" stopColor="#2e3a3a" /><stop offset=".1" stopColor="#7c9a9a" /><stop offset=".5" stopColor="#6f8a70" /><stop offset="1" stopColor="#7d8c90" />
          </linearGradient>
          <linearGradient id="lsEdge" x1="0" y1="0" x2="0" y2="1">
            <stop offset="0" stopColor="#8a8a8a" /><stop offset=".15" stopColor="#606468" /><stop offset=".3" stopColor="#7a3a40" /><stop offset=".36" stopColor="#1c8a3c" /><stop offset=".44" stopColor="#20282e" /><stop offset="1" stopColor="#1c2228" />
          </linearGradient>
          <linearGradient id="lsPanel" x1="0" y1="0" x2="1" y2="0">
            <stop offset="0" stopColor="#a8a8a8" /><stop offset=".6" stopColor="#dcdcdc" /><stop offset="1" stopColor="#b8b8b8" />
          </linearGradient>
        </defs>
        <rect x="0" y="0" width="22" height="44" fill="url(#lsTop)" />
        <path d="M6 10Q12 6 18 10" stroke="#c0201c" strokeWidth="2" fill="none" />
        <rect x="0" y="43" width="22" height="437" fill="url(#lsEdge)" />
        <path d="M1 52Q1 44 8 44H22V71H6V476H2Z" fill="#d9dde1" />
        <path d="M.5 475V52Q.5 43.500 8 43.500H22" fill="none" stroke="#30383c" />
        <rect x="9.500" y="50.500" width="7" height="11" fill="#d8e8f0" stroke="#4a90c8" />
        <rect x="15" y="52" width="5" height="10" fill="#e0c050" />
        <rect x="0" y="72" width="6.500" height="400" fill="url(#lsEdge)" />
        <rect x="7.500" y="71.500" width="10" height="400" fill="url(#lsPanel)" stroke="#222" />
        <rect x="6" y="471" width="13" height="2" fill="#101010" />
        <path d="M0 470Q1 478 8 478H19" fill="none" stroke="#202020" strokeWidth="3" />
      </LeftStrip>
      <Dialog>
        <DialogTitle>
          <DialogCaption>Custom Indicator - show123v2</DialogCaption>
          <DialogButtons>
            <CaptionBtn $w={28}><span style={{ font: "bold 14px 'Liberation Sans'", color: "#f4f4f4", textShadow: "0 0 2px #222, 0 0 2px #222" }}>?</span></CaptionBtn>
            <CaptionBtn $w={47} $red><svg width="12" height="11" viewBox="0 0 12 11"><path d="M1 1L11 10M11 1L1 10" stroke="#6a2a20" strokeWidth="3.6" /><path d="M1 1L11 10M11 1L1 10" stroke="#fff" strokeWidth="2.2" /></svg></CaptionBtn>
          </DialogButtons>
        </DialogTitle>
        <Client>
          <TabBar>
            <Tab $w={46}>Общие</Tab>
            <Tab $w={121} $active>Входные параметры</Tab>
            <Tab $w={42}>Цвета</Tab>
            <Tab $w={80}>Отображение</Tab>
          </TabBar>
          <Pane>
            <List>
              <HeaderRow><HeaderCell>Переменная</HeaderCell><HeaderCell>Значение</HeaderCell></HeaderRow>
              {rows.map((r, i) => (
                <Row key={r.n} $alt={i % 2 === 0}>
                  <NameCell><ParamIcon kind={r.k} />{r.n}</NameCell>
                  <ValueCell>{r.c && <Swatch $c={r.c} />}{r.v}</ValueCell>
                </Row>
              ))}
            </List>
          </Pane>
          <Footer>
            <Btn $def>OK</Btn><Btn>Отмена</Btn><Btn>Сброс</Btn>
            <SizeGrip />
          </Footer>
        </Client>
      </Dialog>
    </Desktop>
  );
}
